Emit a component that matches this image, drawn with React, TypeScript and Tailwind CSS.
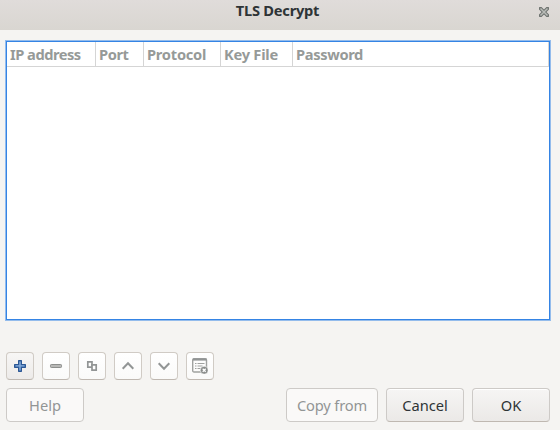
import type { ReactNode } from "react";

const columns = [
  { label: "IP address", cell: "w-[89px]", text: "tracking-[-0.5px]" },
  { label: "Port", cell: "w-[48px]", text: "tracking-[-0.4px]" },
  { label: "Protocol", cell: "w-[77px]", text: "tracking-[-0.25px]" },
  { label: "Key File", cell: "w-[72px]", text: "tracking-[-0.25px]" },
  { label: "Password", cell: "w-[256px]", text: "tracking-[-0.35px]" },
];

function ToolButton({ label, active, children }: { label: string; active?: boolean; children: ReactNode }) {
  return (
    <button
      aria-label={label}
      className={`flex h-7 w-7 items-center justify-center rounded-[4px] border border-[#d0cbc5] border-b-[#bfb8b1] ${
        active ? "bg-linear-to-b from-[#f7f6f5] to-[#edebe9]" : "bg-linear-to-b from-[#ffffff] to-[#fafaf9]"
      }`}
    >
      <svg width="16" height="16" viewBox="0 0 16 16" fill="none">
        {children}
      </svg>
    </button>
  );
}

function TextButton({ label, width, disabled, text }: { label: string; width: string; disabled?: boolean; text: string }) {
  return (
    <button
      className={`h-[34px] ${width} rounded-[4px] border border-[#cdcac7] pb-px text-[14.67px] leading-[30px] ${text} ${
        disabled
          ? "bg-[#faf9f8] text-[#929595]"
          : "border-b-[#bfb8b1] bg-linear-to-b from-[#f6f5f4] to-[#ebe9e7] text-[#2e3436] shadow-[inset_0_1px_#ffffff]"
      }`}
    >
      {label}
    </button>
  );
}

export default function App() {
  return (
    <div className="flex h-[430px] w-[560px] flex-col overflow-hidden bg-[#f5f4f2] font-['Noto_Sans',sans-serif]">
      <header className="grid h-[30px] shrink-0 grid-cols-[40px_1fr_40px] bg-linear-to-b from-[#e0dcda] to-[#d9d6d1]">
        <span />
        <h1 className="pr-[5px] text-center text-[14.67px] leading-[20px] font-bold tracking-[-0.25px] text-[#2e3436]">
          TLS Decrypt
        </h1>
        <svg className="mt-[7px] ml-[19px]" width="10" height="10" viewBox="0 0 10 10" fill="none">
          <path d="M1.500 1.500 8.500 8.500M8.500 1.500 1.500 8.500" stroke="#6f7471" strokeWidth="3.600" strokeLinecap="square" />
          <path d="M2 2 8 8M8 2 2 8" stroke="#b9bcb8" strokeWidth="1.500" strokeLinecap="square" />
        </svg>
      </header>

      <main className="flex flex-1 flex-col pt-[10px] pl-[5px]">
        <section className="h-[281px] w-[546px] border border-[#94bcec]">
          <div className="h-full border border-[#3584e4] bg-white">
            <div className="flex h-[25px] border-b border-[#d5d5d5]">
              {columns.map((c) => (
                <div
                  key={c.label}
                  className={`${c.cell} ${c.text} shrink-0 border-r border-[#d5d5d5] pl-[3px] text-[14.67px] leading-[24px] font-bold whitespace-nowrap text-[#969a98]`}
                >
                  {c.label}
                </div>
              ))}
            </div>
          </div>
        </section>

        <div className="mt-[31px] ml-px flex gap-2">
          <ToolButton label="Add" active>
            <path d="M6 2.5h4V6h3.5v4H10v3.5H6V10H2.5V6H6z" fill="#3465a4" />
            <path d="M7.3 3.5h1.4v3.7h3.8v1.4H8.7v3.9H7.3V8.6H3.5V7.2h3.8z" fill="#88addb" />
            <path d="M6.5 2.5h3V6.500h4v3h-4v4h-3v-4h-4v-3h4z" stroke="#2c5794" />
          </ToolButton>
          <ToolButton label="Remove">
            <rect x="2.500" y="6.500" width="11" height="3" rx=".8" fill="#b8b8b6" stroke="#8c8e8c" />
          </ToolButton>
          <ToolButton label="Copy">
            <path d="M3.800 3.800h4.200v5.400h-4.200z" stroke="#929595" strokeWidth="1.700" />
            <path d="M8 6.800h4.200v5.400h-4.200z" fill="white" stroke="#929595" strokeWidth="1.700" />
          </ToolButton>
          <ToolButton label="Move up">
            <path d="M2.700 10.700 8 5.300 13.300 10.700" stroke="#929595" strokeWidth="2" />
          </ToolButton>
          <ToolButton label="Move down">
            <path d="M2.700 5.300 8 10.700 13.300 5.300" stroke="#929595" strokeWidth="2" />
          </ToolButton>
          <ToolButton label="Clear">
            <rect x=".7" y=".7" width="13.800" height="13.300" rx="1.300" stroke="#a0a2a0" strokeWidth="1.400" />
            <path d="M1 1.500h13.500" stroke="#929595" strokeWidth="2.200" />
            <path d="M3 5.500h1.500M5.500 5.500h7M3 8h1.500M5.500 8h5M3 10.500h1.500M5.500 10.500h3" stroke="#a0a2a0" strokeWidth="1.100" />
            <circle cx="12.200" cy="12.200" r="4" fill="#8a8d8b" stroke="white" strokeWidth=".6" />
            <path d="m10.700 10.700 3 3m0-3-3 3" stroke="white" strokeWidth="1.300" />
          </ToolButton>
        </div>

        <footer className="mt-2 mr-[10px] ml-px flex gap-2">
          <TextButton label="Help" width="w-[78px]" text="tracking-[0px]" disabled />
          <span className="flex-1" />
          <TextButton label="Copy from" width="w-[92px]" text="tracking-[-0.15px]" disabled />
          <TextButton label="Cancel" width="w-[78px]" text="tracking-[0px]" />
          <TextButton label="OK" width="w-[78px]" text="tracking-[0px]" />
        </footer>
      </main>
    </div>
  );
}
